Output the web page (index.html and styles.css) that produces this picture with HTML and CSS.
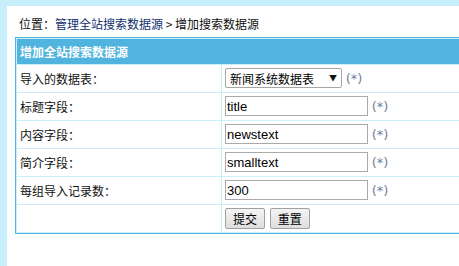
FILE: index.html
```html
<!DOCTYPE html>
<html lang="zh-CN">
<head>
    <meta charset="UTF-8">
    <title>增加搜索数据源</title>
    <link rel="stylesheet" href="styles.css">
</head>
<body>
    <div class="main">
        <div class="nav">位置：<a href="#">管理全站搜索数据源</a> &gt; 增加搜索数据源</div>

        <form name="form1" method="post" action="#">
            <table class="tableborder">
                <tr class="header">
                    <td colspan="2">增加全站搜索数据源</td>
                </tr>
                <tr>
                    <td class="label">导入的数据表：</td>
                    <td>
                        <span class="select-wrap">
                            <select name="tbname">
                                <option>新闻系统数据表</option>
                            </select>
                            <span class="arrow">&#9660;</span>
                        </span>
                        <span class="must">(*)</span>
                    </td>
                </tr>
                <tr>
                    <td class="label">标题字段：</td>
                    <td><input type="text" name="titlefield" value="title"> <span class="must">(*)</span></td>
                </tr>
                <tr>
                    <td class="label">内容字段：</td>
                    <td><input type="text" name="infotextfield" value="newstext"> <span class="must">(*)</span></td>
                </tr>
                <tr>
                    <td class="label">简介字段：</td>
                    <td><input type="text" name="smalltextfield" value="smalltext"> <span class="must">(*)</span></td>
                </tr>
                <tr>
                    <td class="label">每组导入记录数：</td>
                    <td><input type="text" name="loadnum" value="300"> <span class="must">(*)</span></td>
                </tr>
                <tr>
                    <td class="label">&nbsp;</td>
                    <td class="buttons">
                        <button type="submit">提交</button>
                        <button type="reset">重置</button>
                    </td>
                </tr>
            </table>
        </form>
    </div>
</body>
</html>
```

FILE: styles.css
```css
html, body {
    margin: 0;
    padding: 0;
    height: 100%;
    overflow: hidden;
}

body {
    background: #c6eefb;
    font-family: "Noto Sans CJK SC", "Liberation Sans", sans-serif;
    font-size: 12px;
    color: #000;
}

.main {
    box-sizing: border-box;
    background: #fff;
    margin: 6px 0 0 7px;
    padding: 8px 0 8px 8px;
    height: calc(100% - 6px);
    overflow: hidden;
}

.nav {
    height: 20px;
    line-height: 20px;
    padding-left: 4px;
    margin-bottom: 3px;
    color: #111;
}

.nav a {
    color: #10306e;
    text-decoration: none;
}

form {
    margin: 0;
}

.tableborder {
    width: 700px;
    border: 1px solid #4fb4de;
    border-spacing: 1px;
    background: #c9effc;
}

.tableborder td {
    background: #fff;
    padding: 3px;
    height: 20px;
    line-height: 20px;
    white-space: nowrap;
    color: #111;
}

.tableborder .header td {
    background: #51b4de;
    color: #fff;
    font-weight: bold;
    height: 25px;
    padding: 0 3px;
    line-height: 25px;
}

.tableborder td.label {
    width: 198px;
}

.select-wrap {
    position: relative;
    display: inline-block;
    vertical-align: top;
}

select {
    appearance: none;
    -webkit-appearance: none;
    width: 117px;
    height: 20px;
    border: 1px solid #a6a6a6;
    border-radius: 2px;
    background: #fff;
    font-family: "Noto Sans CJK SC", sans-serif;
    font-size: 12px;
    padding: 0 0 0 4px;
    color: #000;
    margin: 0;
}

.arrow {
    position: absolute;
    right: 5px;
    top: 0;
    line-height: 20px;
    font-size: 8px;
    pointer-events: none;
}

input[type="text"] {
    box-sizing: border-box;
    width: 143px;
    height: 20px;
    border: 1px solid #a9a9a9;
    padding: 0 1px;
    margin: 0;
    font-family: "Liberation Sans", sans-serif;
    font-size: 13px;
    color: #000;
    vertical-align: top;
}

.must {
    color: #6f7f9c;
    font-family: "DejaVu Sans", sans-serif;
    font-size: 13px;
    margin-left: 1px;
}

.buttons button {
    box-sizing: border-box;
    width: 40px;
    height: 21px;
    padding: 0;
    margin: 0 2px 0 0;
    border: 1px solid #a0a0a0;
    border-radius: 2px;
    background: linear-gradient(#f4f4f4, #dedede);
    font-family: "Noto Sans CJK SC", sans-serif;
    font-size: 12px;
    color: #000;
    vertical-align: top;
}
```
